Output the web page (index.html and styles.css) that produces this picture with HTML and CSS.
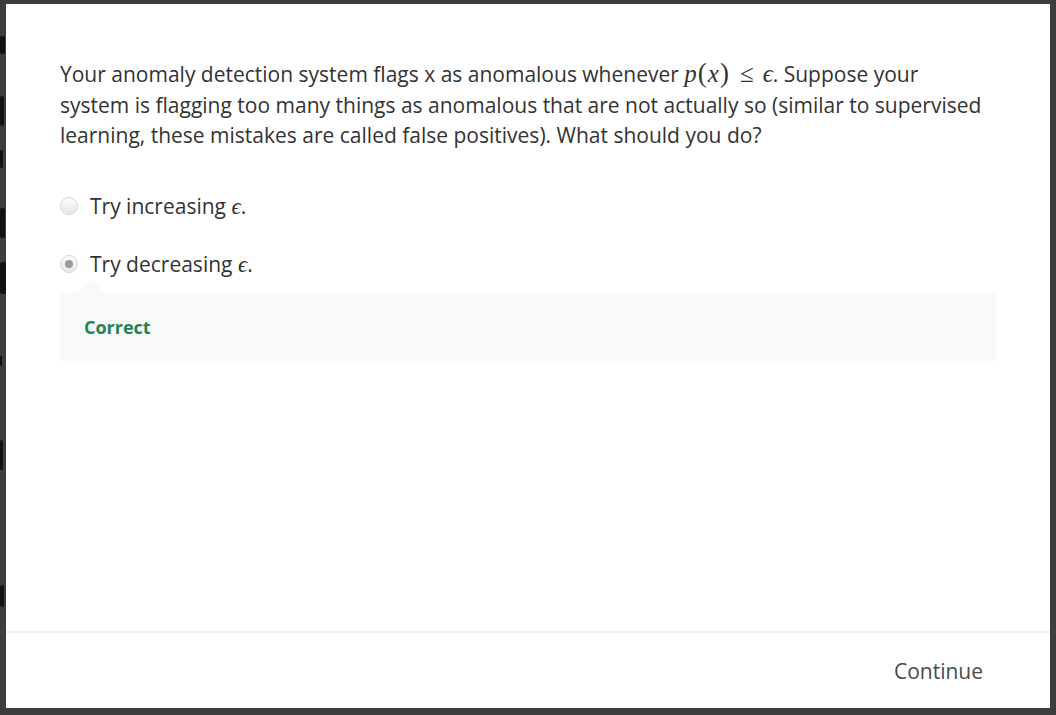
FILE: index.html
```html
<!DOCTYPE html>
<html>
<head>
<meta charset="utf-8">
<link rel="stylesheet" href="styles.css">
</head>
<body>
<div class="backdrop">
  <span class="frag f1"></span>
  <span class="frag f2"></span>
  <span class="frag f3"></span>
  <span class="frag f4"></span>
  <span class="frag f5"></span>
  <span class="frag f6"></span>
  <span class="frag f7"></span>
  <span class="frag f8"></span>
</div>
<div class="modal">
  <div class="content">
    <p class="question">Your anomaly detection system flags x as anomalous whenever <span class="math"><i>p</i><span class="paren">(</span><i>x</i><span class="paren">)</span><span class="rel">≤</span><i>ϵ</i></span>. Suppose your system is flagging too many things as anomalous that are not actually so (similar to supervised learning, these mistakes are called false positives). What should you do?</p>
    <div class="option first">
      <span class="radio"></span>
      <span class="label">Try increasing <span class="math small"><i>ϵ</i></span>.</span>
    </div>
    <div class="option">
      <span class="radio checked"></span>
      <span class="label">Try decreasing <span class="math small"><i>ϵ</i></span>.</span>
    </div>
    <div class="feedback">
      <span class="correct">Correct</span>
    </div>
  </div>
  <div class="footer">
    <span class="continue">Continue</span>
  </div>
</div>
</body>
</html>
```
FILE: styles.css
```css
html, body {
  margin: 0;
  padding: 0;
  height: 100%;
}
body {
  background: #3d3d3d;
  font-family: "Open Sans", "Liberation Sans", sans-serif;
  overflow: hidden;
  position: relative;
}
.backdrop {
  position: absolute;
  left: 0;
  top: 0;
  width: 6px;
  height: 100%;
  overflow: hidden;
}
.frag {
  position: absolute;
  left: 0;
  background: #111;
  border-radius: 2px;
}
.f1 { top: 36px; width: 5px; height: 18px; }
.f2 { top: 96px; width: 4px; height: 30px; }
.f3 { top: 150px; width: 3px; height: 18px; }
.f4 { top: 208px; width: 5px; height: 30px; }
.f5 { top: 262px; width: 6px; height: 32px; }
.f6 { top: 440px; width: 3px; height: 30px; }
.f7 { top: 585px; width: 4px; height: 22px; }
.f8 { top: 356px; width: 2px; height: 10px; }
.modal {
  position: absolute;
  left: 6px;
  top: 4px;
  width: 1044px;
  height: 704px;
  background: #fff;
  display: flex;
  flex-direction: column;
}
.content {
  flex: 1;
  padding: 54px 54px 0 54px;
}
.question {
  margin: 0;
  max-width: 928px;
  font-size: 21px;
  line-height: 30.5px;
  color: #333;
}
.math {
  font-family: "Liberation Serif", "DejaVu Serif", serif;
  font-size: 25px;
  color: #333;
  white-space: nowrap;
}
.math i {
  font-style: italic;
}
.math .paren {
  font-size: 27px;
  margin: 0 1px;
}
.math .rel {
  margin: 0 9px 0 10px;
}
.option {
  display: flex;
  align-items: center;
  gap: 12px;
  height: 58px;
}
.option.first {
  margin-top: 26px;
}
.radio {
  width: 16px;
  height: 16px;
  border-radius: 50%;
  border: 1px solid #d6d6d6;
  background: linear-gradient(#fdfdfd, #e6e6e6);
  display: flex;
  align-items: center;
  justify-content: center;
  flex: none;
}
.radio.checked::after {
  content: "";
  width: 8px;
  height: 8px;
  border-radius: 50%;
  background: #9b9b9b;
}
.label {
  font-size: 21px;
  color: #333;
}
.math.small {
  font-size: 23px;
}
.feedback {
  position: relative;
  background: #f9f9f9;
  height: 68px;
  display: flex;
  align-items: center;
  padding-left: 24px;
}
.feedback::before {
  content: "";
  position: absolute;
  left: 17px;
  top: -14px;
  border-left: 14px solid transparent;
  border-right: 14px solid transparent;
  border-bottom: 14px solid #f9f9f9;
}
.correct {
  font-weight: 700;
  font-size: 18px;
  color: #1f8354;
}
.footer {
  border-top: 2px solid #eeeeee;
  height: 75px;
  display: flex;
  align-items: center;
  justify-content: flex-end;
  padding-right: 67px;
}
.continue {
  font-size: 21px;
  color: #4a4a4a;
}
```
